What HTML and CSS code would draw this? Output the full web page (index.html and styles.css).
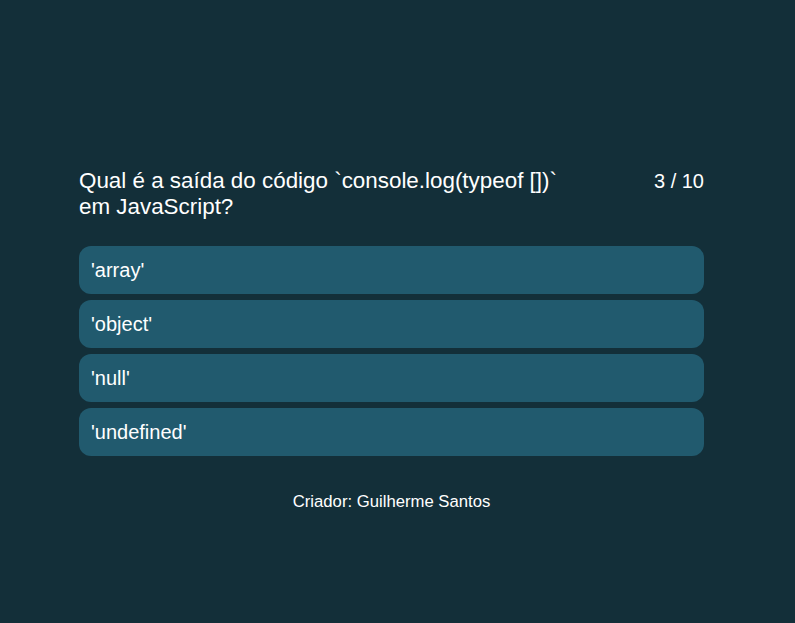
FILE: index.html
```html
<!DOCTYPE html>
<html lang="pt">
<head>
<meta charset="utf-8">
<link rel="stylesheet" href="styles.css">
</head>
<body>
<main class="app">
  <section class="quiz">
    <header class="quiz-header">
      <h1 class="question">Qual é a saída do código `console.log(typeof [])` em JavaScript?</h1>
      <span class="counter">3 / 10</span>
    </header>
    <div class="options">
      <button class="option">'array'</button>
      <button class="option">'object'</button>
      <button class="option">'null'</button>
      <button class="option">'undefined'</button>
    </div>
  </section>
  <footer class="credit">Criador: Guilherme Santos</footer>
</main>
</body>
</html>
```
FILE: styles.css
```css
html, body {
  margin: 0;
  padding: 0;
  background: #132f39;
  height: 100%;
}
body {
  font-family: "Liberation Sans", Arial, sans-serif;
  color: #ffffff;
}
.app {
  display: flex;
  flex-direction: column;
  align-items: center;
  padding: 168px 91px 0 79px;
}
.quiz {
  width: 625px;
}
.quiz-header {
  display: flex;
  justify-content: space-between;
  align-items: flex-start;
  gap: 20px;
}
.question {
  margin: 0;
  font-size: 22.4px;
  font-weight: normal;
  line-height: 26px;
  max-width: 500px;
}
.counter {
  font-size: 20px;
  line-height: 26px;
  white-space: nowrap;
}
.options {
  display: flex;
  flex-direction: column;
  gap: 6px;
  margin-top: 26px;
}
.option {
  font-family: inherit;
  font-size: 20px;
  color: #ffffff;
  background: #215a6e;
  border: none;
  border-radius: 12px;
  height: 48px;
  padding: 0 12px;
  text-align: left;
}
.credit {
  margin-top: 36px;
  font-size: 16.7px;
}
```
